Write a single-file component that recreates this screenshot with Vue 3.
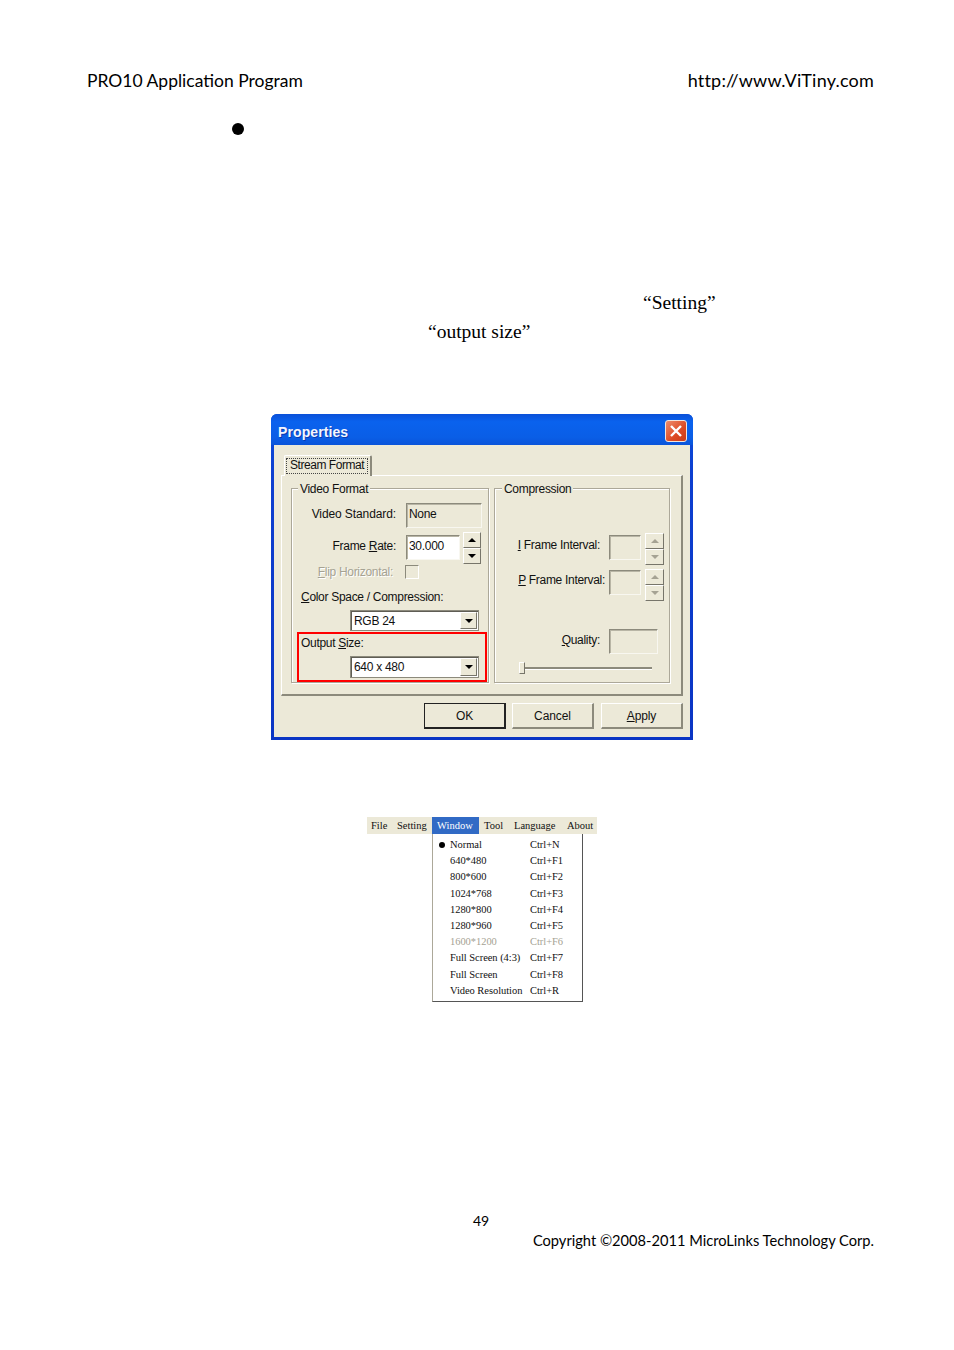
<script setup>
const menus = ['File', 'Setting', 'Window', 'Tool', 'Language', 'About'];

const sizes = [
  { name: 'Normal', key: 'Ctrl+N', checked: true },
  { name: '640*480', key: 'Ctrl+F1' },
  { name: '800*600', key: 'Ctrl+F2' },
  { name: '1024*768', key: 'Ctrl+F3' },
  { name: '1280*800', key: 'Ctrl+F4' },
  { name: '1280*960', key: 'Ctrl+F5' },
  { name: '1600*1200', key: 'Ctrl+F6', disabled: true },
  { name: 'Full Screen (4:3)', key: 'Ctrl+F7' },
  { name: 'Full Screen', key: 'Ctrl+F8' },
  { name: 'Video Resolution', key: 'Ctrl+R' },
];
</script>

<template>
  <div class="page">
    <header class="doc-header">
      <span class="left">PRO10 Application Program</span>
      <span class="url">http://www.ViTiny.com</span>
    </header>

    <div class="bullet"></div>

    <p class="doc-line first">“Setting”</p>
    <p class="doc-line second">“output size”</p>

    <div class="dialog">
      <div class="titlebar">
        <span class="title">Properties</span>
        <span class="close">
          <svg width="14" height="14" viewBox="0 0 14 14">
            <path d="M2 2 L12 12 M12 2 L2 12" stroke="#fff" stroke-width="2.4" fill="none" />
          </svg>
        </span>
      </div>

      <div class="body">
        <div class="tab"><span class="tab-focus">Stream Format</span></div>

        <div class="panel">
          <div class="group video">
            <div class="legend">Video Format</div>

            <div class="row standard">
              <label class="lbl">Video Standard:</label>
              <div class="field static wide-none">None</div>
            </div>

            <div class="row rate">
              <label class="lbl">Frame <u>R</u>ate:</label>
              <div class="field static rate-field">30.000</div>
              <div class="spin">
                <div class="spin-btn"><i class="up"></i></div>
                <div class="spin-btn"><i class="down"></i></div>
              </div>
            </div>

            <div class="row flip">
              <label class="lbl off"><u>F</u>lip Horizontal:</label>
              <div class="check"></div>
            </div>

            <div class="plain-label color-label"><u>C</u>olor Space / Compression:</div>
            <div class="combo color-combo">
              <span class="combo-text">RGB 24</span>
              <span class="combo-btn"><i class="down"></i></span>
            </div>

            <div class="output-box">
              <div class="plain-label">Output <u>S</u>ize:</div>
              <div class="combo output-combo">
                <span class="combo-text">640 x 480</span>
                <span class="combo-btn"><i class="down"></i></span>
              </div>
            </div>
          </div>

          <div class="group compression">
            <div class="legend">Compression</div>

            <div class="row i-row">
              <label class="lbl-c"><u>I</u> Frame Interval:</label>
              <div class="field static small"></div>
              <div class="spin off">
                <div class="spin-btn"><i class="up"></i></div>
                <div class="spin-btn"><i class="down"></i></div>
              </div>
            </div>

            <div class="row p-row">
              <label class="lbl-c wide"><u>P</u> Frame Interval:</label>
              <div class="field static small"></div>
              <div class="spin off">
                <div class="spin-btn"><i class="up"></i></div>
                <div class="spin-btn"><i class="down"></i></div>
              </div>
            </div>

            <div class="row q-row">
              <label class="lbl-c"><u>Q</u>uality:</label>
              <div class="field static quality"></div>
            </div>

            <div class="slider">
              <div class="thumb"></div>
              <div class="track"></div>
            </div>
          </div>
        </div>

        <div class="buttons">
          <button class="btn default">OK</button>
          <button class="btn">Cancel</button>
          <button class="btn"><u>A</u>pply</button>
        </div>
      </div>
    </div>

    <div class="menu">
      <div class="menubar">
        <div v-for="m in menus" :key="m" :class="['menu-item', { active: m === 'Window' }]">{{ m }}</div>
      </div>
      <div class="dropdown">
        <div v-for="s in sizes" :key="s.name" :class="['drop-row', { disabled: s.disabled }]">
          <span class="dot-col"><span v-if="s.checked" class="dot"></span></span>
          <span>{{ s.name }}</span>
          <span>{{ s.key }}</span>
        </div>
      </div>
    </div>

    <footer class="doc-footer">
      <div class="page-no">49</div>
      <div class="copyright">Copyright ©2008-2011 MicroLinks Technology Corp.</div>
    </footer>
  </div>
</template>

<style scoped>
.page {
  width: 954px;
  height: 1350px;
  overflow: hidden;
  background: #fff;
  color: #000;
  font-family: "Lato", "Liberation Sans", sans-serif;
}

.doc-header {
  display: flex;
  align-items: baseline;
  justify-content: space-between;
  padding: 69px 80px 0 87px;
  font-size: 17.5px;
  line-height: 22px;
}

.url {
  font-size: 18px;
  letter-spacing: 0.2px;
}

.bullet {
  width: 12px;
  height: 12px;
  margin: 31px 0 0 232px;
  border-radius: 50%;
  background: #000;
}

.doc-line {
  margin: 0;
  font-family: "Liberation Serif", serif;
  font-size: 19.5px;
  line-height: 29px;
}

.doc-line.first {
  margin-top: 153px;
  padding-left: 643px;
}

.doc-line.second {
  padding-left: 428px;
}

.dialog {
  box-sizing: border-box;
  width: 422px;
  height: 326px;
  margin: 68px 0 0 271px;
  padding: 0 3px 3px;
  border-radius: 6px 6px 0 0;
  background: linear-gradient(#0a4fdc, #0d3fd0 60px, #0a35c4);
  font-family: "Liberation Sans", sans-serif;
  font-size: 12px;
  letter-spacing: -0.3px;
  color: #111;
}

.titlebar {
  display: flex;
  align-items: center;
  justify-content: space-between;
  height: 31px;
  margin: 0 -3px;
  padding: 5px 6px 0 7px;
  box-sizing: border-box;
  border-radius: 6px 6px 0 0;
  background: linear-gradient(#0a50d8, #0a62ee 25%, #0a5ee6 75%, #0a54da);
}

.title {
  font-size: 14px;
  font-weight: bold;
  letter-spacing: 0.1px;
  color: #f4f6ff;
  text-shadow: 1px 1px 0 #0a3ab0;
}

.close {
  display: flex;
  align-items: center;
  justify-content: center;
  box-sizing: border-box;
  width: 22px;
  height: 22px;
  margin-top: -2px;
  border: 1px solid #f2e4dc;
  border-radius: 3px;
  background: linear-gradient(135deg, #ee8d6e, #dd4a23 60%, #c93b17);
}

.body {
  box-sizing: border-box;
  height: 292px;
  padding: 10px 7px 0;
  background: #ece9d8;
}

.tab {
  box-sizing: border-box;
  width: 88px;
  height: 21px;
  margin-left: 3px;
  margin-bottom: -1px;
  padding: 2px 2px 0 1px;
  border: 1px solid #fff;
  border-right: 2px solid #8c8a7c;
  border-bottom: none;
  border-radius: 2px 2px 0 0;
  background: #ece9d8;
  position: relative;
}

.tab-focus {
  display: block;
  height: 16px;
  padding-left: 4px;
  line-height: 15px;
  letter-spacing: -0.45px;
  white-space: nowrap;
  outline: 1px dotted #444;
  outline-offset: -1px;
}

.panel {
  display: flex;
  gap: 5px;
  box-sizing: border-box;
  width: 402px;
  height: 221px;
  padding: 12px 0 0 9px;
  border: 1px solid #fff;
  border-right: 2px solid #8c8a7c;
  border-bottom: 2px solid #8c8a7c;
}

.group {
  box-sizing: border-box;
  height: 195px;
  border: 1px solid #aca899;
  box-shadow: 1px 1px 0 #fff, inset 1px 1px 0 #fff;
}

.group.video {
  width: 198px;
}

.group.compression {
  width: 176px;
}

.legend {
  width: max-content;
  height: 14px;
  margin: -7px 0 -1px 6px;
  padding: 0 2px;
  line-height: 14px;
  background: #ece9d8;
}

.compression .legend {
  margin-left: 7px;
}

.row {
  display: flex;
  align-items: center;
}

.standard {
  height: 25px;
  margin-top: 8px;
}

.standard .lbl {
  margin-bottom: 3px;
  letter-spacing: -0.1px;
}

.rate {
  height: 32px;
  margin-top: 4px;
}

.rate .lbl {
  margin-bottom: 5px;
}

.rate .field {
  margin-bottom: 2px;
}

.flip {
  height: 14px;
  margin-top: 1px;
}

.lbl {
  width: 104px;
  margin-right: 10px;
  text-align: right;
}

.lbl.off {
  width: 101px;
  margin-right: 12px;
  color: #a5a293;
  text-shadow: 1px 1px 0 #fff;
}

.field {
  box-sizing: border-box;
  padding: 0 2px;
  border: 1px solid #8c8a7c;
  border-right-color: #f8f7f0;
  border-bottom-color: #f8f7f0;
  box-shadow: inset 1px 1px 0 #b8b5a5;
}

.field.static {
  height: 25px;
  line-height: 20px;
}

.wide-none {
  width: 76px;
}

.field.rate-field {
  width: 54px;
  background: #fff;
}

.field.small {
  width: 32px;
}

.field.quality {
  width: 49px;
}

.check {
  box-sizing: border-box;
  width: 14px;
  height: 14px;
  border: 1px solid #8c8a7c;
  border-right-color: #fff;
  border-bottom-color: #fff;
}

.spin {
  display: flex;
  flex-direction: column;
  gap: 0;
  width: 18px;
  margin-left: 3px;
}

.compression .spin {
  width: 19px;
  margin-left: 4px;
}

.spin-btn {
  display: flex;
  align-items: center;
  justify-content: center;
  box-sizing: border-box;
  height: 16px;
  border: 1px solid #fff;
  border-right-color: #77756a;
  border-bottom-color: #77756a;
  background: #ece9d8;
}

.up {
  width: 0;
  height: 0;
  border: 4px solid transparent;
  border-top: none;
  border-bottom: 4px solid #000;
}

.down {
  width: 0;
  height: 0;
  border: 4px solid transparent;
  border-bottom: none;
  border-top: 4px solid #000;
}

.spin.off .up {
  border-bottom-color: #a5a293;
}

.spin.off .down {
  border-top-color: #a5a293;
}

.plain-label {
  height: 14px;
  line-height: 14px;
}

.color-label {
  margin: 11px 0 0 9px;
}

.combo {
  display: flex;
  align-items: center;
  justify-content: space-between;
  box-sizing: border-box;
  width: 129px;
  padding: 1px 1px 1px 3px;
  border: 1px solid #8c8a7c;
  background: #fff;
  box-shadow: inset 1px 1px 0 #5f5d54;
}

.color-combo {
  height: 21px;
  margin: 6px 0 0 58px;
}

.output-combo {
  height: 22px;
  margin: 6px 0 0 49px;
}

.combo-btn {
  display: flex;
  align-items: center;
  justify-content: center;
  box-sizing: border-box;
  width: 17px;
  height: 100%;
  border: 1px solid #fff;
  border-right-color: #77756a;
  border-bottom-color: #77756a;
  background: #ece9d8;
}

.output-box {
  box-sizing: border-box;
  width: 190px;
  height: 50px;
  margin: 1px 0 0 5px;
  padding: 2px 0 0 2px;
  border: 2px solid #f00;
}

.lbl-c {
  width: 105px;
  margin-right: 9px;
  text-align: right;
}

.lbl-c.wide {
  width: 110px;
  margin-right: 4px;
}

.i-row {
  height: 32px;
  margin-top: 38px;
}

.i-row .lbl-c {
  margin-bottom: 8px;
}

.i-row .field {
  margin-bottom: 3px;
}

.p-row {
  height: 32px;
  margin-top: 4px;
}

.p-row .lbl-c {
  margin-bottom: 10px;
}

.p-row .field {
  margin-bottom: 5px;
}

.q-row {
  height: 25px;
  margin-top: 28px;
}

.q-row .lbl-c {
  margin-bottom: 3px;
}

.slider {
  display: flex;
  align-items: center;
  width: 133px;
  height: 12px;
  margin: 8px 0 0 24px;
}

.thumb {
  box-sizing: border-box;
  width: 6px;
  height: 12px;
  border: 1px solid #fff;
  border-right-color: #77756a;
  border-bottom-color: #77756a;
  background: #ece9d8;
}

.track {
  flex: 1;
  height: 2px;
  background: #8c8a7c;
  border-bottom: 1px solid #fff;
}

.buttons {
  display: flex;
  justify-content: flex-end;
  gap: 6px;
  width: 402px;
  margin-top: 7px;
}

.btn {
  box-sizing: border-box;
  width: 82px;
  height: 26px;
  padding: 0;
  border: 1px solid #fff;
  border-right: 2px solid #8c8a7c;
  border-bottom: 2px solid #8c8a7c;
  border-radius: 0;
  background: #ece9d8;
  font: inherit;
  letter-spacing: -0.1px;
  color: inherit;
}

.btn:last-child {
  margin-left: 1px;
}

.btn.default {
  border: 1px solid #222;
  border-right: 2px solid #222;
  border-bottom: 2px solid #222;
}

.menu {
  width: 230px;
  margin: 77px 0 0 367px;
  font-family: "Liberation Serif", serif;
  font-size: 10.5px;
  color: #111;
}

.menubar {
  display: grid;
  grid-template-columns: 25px 40px 47px 30px 53px 35px;
  height: 17px;
  background: #ece9d8;
  line-height: 17px;
}

.menu-item {
  padding-left: 5px;
}

.menu-item:first-child {
  padding-left: 4px;
}

.menu-item.active {
  background: #316ac5;
  color: #fff;
}

.dropdown {
  box-sizing: border-box;
  width: 151px;
  height: 168px;
  margin-left: 65px;
  padding-top: 3px;
  border-left: 1px solid #aca899;
  border-right: 1px solid #555;
  border-bottom: 1px solid #555;
  background: #fff;
}

.drop-row {
  display: grid;
  grid-template-columns: 17px 80px 1fr;
  height: 16.2px;
  line-height: 16px;
  letter-spacing: -0.05px;
}

.drop-row.disabled {
  color: #a5a293;
}

.dot-col {
  display: flex;
  align-items: center;
  padding-left: 6px;
}

.dot {
  width: 6px;
  height: 6px;
  border-radius: 50%;
  background: #000;
}

.doc-footer {
  margin-top: 208px;
}

.page-no {
  padding-left: 473px;
  font-size: 14px;
  line-height: 22px;
}

.copyright {
  padding-right: 80px;
  text-align: right;
  font-size: 14.65px;
  line-height: 17px;
}
</style>
